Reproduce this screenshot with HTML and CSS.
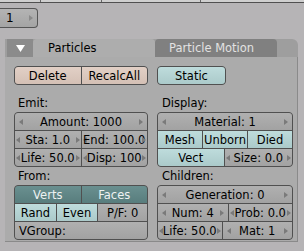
FILE: index.html
```html
<!DOCTYPE html>
<html>
<head>
<meta charset="utf-8">
<link rel="stylesheet" href="styles.css">
</head>
<body>
<div class="topstrip"><span class="tick t1"></span><span class="tick t2"></span><span class="tick t3"></span></div>
<div class="topbar">
  <div class="framebtn"><span class="fnum">1</span><i class="ar r"></i></div>
</div>
<div class="panel">
  <div class="tabs">
    <div class="tri"><svg width="9" height="7" viewBox="0 0 9 7"><path d="M0 0H9L4.5 7Z" fill="#fff"/></svg></div>
    <div class="tab active">Particles</div>
    <div class="tab other">Particle Motion</div>
    <div class="tabend"></div>
  </div>
  <div class="body">
    <div class="col">
      <div class="grp"><div class="row"><div class="b act">Delete</div><div class="b act">RecalcAll</div></div></div>
      <div class="lbl big">Emit:</div>
      <div class="grp">
        <div class="row"><div class="b num"><i class="ar l"></i><span>Amount: 1000</span><i class="ar r"></i></div></div>
        <div class="row"><div class="b num tight"><i class="ar l"></i><span>Sta: 1.0</span><i class="ar r"></i></div><div class="b num tight"><i class="ar l"></i><span>End: 100.0</span><i class="ar r"></i></div></div>
        <div class="row"><div class="b num tight"><i class="ar l"></i><span>Life: 50.0</span><i class="ar r"></i></div><div class="b num tight"><i class="ar l"></i><span>Disp: 100</span><i class="ar r"></i></div></div>
      </div>
      <div class="lbl">From:</div>
      <div class="grp">
        <div class="row"><div class="b sel">Verts</div><div class="b sel">Faces</div></div>
        <div class="row"><div class="b tog">Rand</div><div class="b tog">Even</div><div class="b num plain">P/F: 0</div></div>
        <div class="row"><div class="b num txt">VGroup:</div></div>
      </div>
    </div>
    <div class="col">
      <div class="grp half"><div class="row"><div class="b tog">Static</div></div></div>
      <div class="lbl big r">Display:</div>
      <div class="grp">
        <div class="row"><div class="b num"><i class="ar l"></i><span>Material: 1</span><i class="ar r"></i></div></div>
        <div class="row"><div class="b tog">Mesh</div><div class="b tog">Unborn</div><div class="b tog">Died</div></div>
        <div class="row"><div class="b tog">Vect</div><div class="b num tight"><i class="ar l"></i><span>Size: 0.0</span><i class="ar r"></i></div></div>
      </div>
      <div class="lbl r">Children:</div>
      <div class="grp">
        <div class="row"><div class="b num"><i class="ar l"></i><span>Generation: 0</span><i class="ar r"></i></div></div>
        <div class="row"><div class="b num"><i class="ar l"></i><span>Num: 4</span><i class="ar r"></i></div><div class="b num tight"><i class="ar l"></i><span>Prob: 0.0</span><i class="ar r"></i></div></div>
        <div class="row"><div class="b num tight"><i class="ar l"></i><span>Life: 50.0</span><i class="ar r"></i></div><div class="b num"><i class="ar l"></i><span>Mat: 1</span><i class="ar r"></i></div></div>
      </div>
    </div>
  </div>
</div>
</body>
</html>
```
FILE: styles.css
```css
* { box-sizing: border-box; }
html, body { margin: 0; padding: 0; }
body {
  width: 304px;
  height: 251px;
  overflow: hidden;
  background: #b6b4b6;
  font-family: "DejaVu Sans", sans-serif;
  font-size: 11.5px;
  color: #000;
}
.topstrip {
  height: 3px;
  background: #cfcfcf;
  border-bottom: 1px solid #505050;
  display: flex;
  align-items: flex-end;
}
.tick { display: block; width: 1px; height: 2px; background: #666; }
.t1 { margin-left: 40px; }
.t2 { margin-left: 60px; }
.t3 { margin-left: 98px; }
.topbar { padding-top: 5px; }
.framebtn {
  width: 38px;
  height: 20px;
  border: 1px solid #555;
  border-left: none;
  border-radius: 0 4px 4px 0;
  background: linear-gradient(#b4b4b4, #a4a4a4);
  display: flex;
  align-items: center;
  justify-content: space-between;
  padding: 0 4px 0 6px;
  font-size: 12px;
}
.fnum { line-height: 12px; }
.framebtn .ar.r { border-left-color: #8a8a8a; }
.panel { margin: 11px 0 0 5px; width: 293px; }
.tabs {
  display: flex;
  height: 18px;
  background: #9e9e9e;
  border-radius: 0 6px 0 0;
  padding-left: 2px;
}
.tri {
  width: 26px;
  background: #8b8b8b;
  display: flex;
  align-items: center;
  justify-content: center;
  padding-left: 1px;
}
.tab {
  width: 122px;
  display: flex;
  align-items: center;
  line-height: 12px;
  border-radius: 4px 4px 0 0;
}
.tab.active { background: #adadad; padding-left: 15px; color: #000; }
.tab.other { background: #808080; padding-left: 14px; color: #e2e2e2; }
.tabend { flex: 1; }
.body {
  background: #ababab;
  height: 185px;
  border-right: 1px solid #8a8a8a;
  border-bottom: 1px solid #8a8a8a;
  padding: 9px 0 0 9px;
  display: grid;
  grid-template-columns: 134px 136px;
  column-gap: 9px;
  align-content: start;
}
.col { display: flex; flex-direction: column; }
.grp {
  display: flex;
  flex-direction: column;
  gap: 1px;
  border: 1px solid #505050;
  border-radius: 4px;
  overflow: hidden;
  background: #505050;
}
.grp.half { width: 69px; }
.row { display: flex; gap: 1px; height: 17px; }
.b {
  flex: 1 1 0;
  min-width: 0;
  display: flex;
  align-items: center;
  justify-content: center;
  line-height: 12px;
  white-space: nowrap;
  overflow: hidden;
}
.act { background: linear-gradient(#e2d0c6, #d4c0b5); }
.tog { background: linear-gradient(#bedcdc, #abcaca); }
.sel { background: linear-gradient(#6a9090, #587d7d); color: #eef2f2; }
.num {
  background: linear-gradient(#b0b0b0, #a2a2a2);
  justify-content: space-between;
  padding: 0 4px;
}
.num span { flex: 1; text-align: center; }
.num.tight { padding: 0 1px; }
.num.tight span { margin: 0 -5px; }
.num.plain { justify-content: center; }
.num.txt { justify-content: flex-start; padding-left: 4px; }
.ar { display: block; width: 0; height: 0; border-top: 3px solid transparent; border-bottom: 3px solid transparent; flex: none; }
.ar.l { border-right: 4px solid #7a7a7a; }
.ar.r { border-left: 4px solid #7a7a7a; }
.lbl { height: 18px; padding: 3px 0 0 4px; line-height: 12px; }
.lbl.big { height: 27px; padding-top: 12px; }
.lbl.r { padding-left: 5px; }
```
